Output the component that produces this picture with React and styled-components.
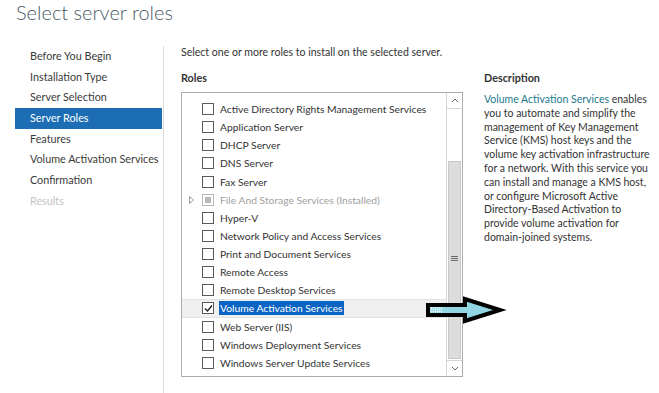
import React from "react";
import styled, { createGlobalStyle } from "styled-components";

const Global = createGlobalStyle`
  html, body { margin: 0; padding: 0; background: #fff; }
  body { font-family: "Lato", "Noto Sans", sans-serif; font-size: 10.8px; color: #333; }
  #root { position: relative; width: 659px; height: 393px; overflow: hidden; }
`;

const Page = styled.div`
  position: relative;
  width: 659px;
  height: 393px;
`;

const Title = styled.h1`
  margin: 0;
  padding: 0 0 0 16px;
  height: 46px;
  font-family: "Lato", "Open Sans", sans-serif;
  font-weight: 300;
  font-size: 20px;
  line-height: 24px;
  color: #4a5a66;
`;

const Body = styled.div`
  display: flex;
  height: 347px;
`;

const Nav = styled.nav`
  width: 147px;
  padding-left: 15px;
  border-right: 1px solid #dcdcdc;
  padding-right: 1px;
`;

const NavItem = styled.div`
  height: 20.7px;
  line-height: 20.7px;
  padding-left: 15px;
  white-space: nowrap;
  color: ${(p) => (p.$active ? "#fff" : p.$disabled ? "#c4c4c4" : "#3a3a3a")};
  background: ${(p) => (p.$active ? "#1c6db4" : "transparent")};
`;

const Content = styled.div`
  flex: 1;
  padding-left: 17px;
`;

const Intro = styled.div`
  height: 12px;
  line-height: 12px;
  font-size: 10.55px;
  color: #333;
`;

const Columns = styled.div`
  display: flex;
  gap: 21px;
  margin-top: 13px;
`;

const RolesCol = styled.div`
  width: 282px;
`;

const Heading = styled.div`
  font-weight: 700;
  color: #333;
  height: 14px;
  line-height: 14px;
`;

const ListBox = styled.div`
  margin-top: 7px;
  height: 283px;
  border: 1px solid #acacac;
  display: flex;
`;

const Rows = styled.div`
  flex: 1;
  padding-top: 7px;
`;

const Row = styled.div`
  display: flex;
  align-items: center;
  height: 18.14px;
  box-sizing: border-box;
  background: ${(p) => (p.$selected ? "#f0f0f0" : "transparent")};
  border-top: 1px solid ${(p) => (p.$selected ? "#e2e2e2" : "transparent")};
  border-bottom: 1px solid ${(p) => (p.$selected ? "#e2e2e2" : "transparent")};
`;

const Expander = styled.div`
  width: 20px;
  display: flex;
  justify-content: center;
  padding-right: 1px;
  box-sizing: border-box;
`;

const Box = styled.div`
  width: 10px;
  height: 10px;
  border: 1px solid ${(p) => (p.$disabled ? "#b5b5b5" : "#5a5a5a")};
  background: #fff;
  display: flex;
  align-items: center;
  justify-content: center;
  flex: none;
`;

const Fill = styled.div`
  width: 6px;
  height: 6px;
  background: #b8b8b8;
`;

const Label = styled.span`
  margin-left: 5px;
  padding: 0 1px;
  white-space: nowrap;
  font-size: 10.3px;
  line-height: 14px;
  color: ${(p) => (p.$disabled ? "#a0a0a0" : p.$selected ? "#fff" : "#333")};
  background: ${(p) => (p.$selected ? "#0a64c4" : "transparent")};
`;

const Scrollbar = styled.div`
  width: 15px;
  border-left: 1px solid #d6d6d6;
  display: flex;
  flex-direction: column;
  background: #fff;
`;

const ScrollBtn = styled.div`
  height: 15px;
  display: flex;
  align-items: center;
  justify-content: center;
  border-${(p) => (p.$down ? "top" : "bottom")}: 1px solid #d6d6d6;
`;

const Track = styled.div`
  flex: 1;
  padding-top: 52px;
  padding-bottom: 1px;
  display: flex;
  flex-direction: column;
`;

const Thumb = styled.div`
  flex: 1;
  margin: 0 1px;
  background: #dcdcdc;
  border: 1px solid #c8c8c8;
  display: flex;
  align-items: center;
  justify-content: center;
`;

const Grip = styled.div`
  width: 7px;
  height: 5px;
  background: repeating-linear-gradient(#6a6a6a 0 1px, transparent 1px 2px);
  margin-top: -4px;
`;

const Desc = styled.div`
  width: 172px;
`;

const DescText = styled.div`
  margin-top: 8px;
  line-height: 13.8px;
  font-size: 10.5px;
  color: #333;
`;

const Line = styled.div`
  white-space: nowrap;
`;

const Link = styled.span`
  color: #1b7a8e;
`;

const ArrowOverlay = styled.svg`
  position: absolute;
  left: 422px;
  top: 296px;
`;

const navItems = [
  "Before You Begin",
  "Installation Type",
  "Server Selection",
  "Server Roles",
  "Features",
  "Volume Activation Services",
  "Confirmation",
  "Results",
];

const roles = [
  { name: "Active Directory Rights Management Services" },
  { name: "Application Server" },
  { name: "DHCP Server" },
  { name: "DNS Server" },
  { name: "Fax Server" },
  { name: "File And Storage Services (Installed)", installed: true },
  { name: "Hyper-V" },
  { name: "Network Policy and Access Services" },
  { name: "Print and Document Services" },
  { name: "Remote Access" },
  { name: "Remote Desktop Services" },
  { name: "Volume Activation Services", checked: true },
  { name: "Web Server (IIS)" },
  { name: "Windows Deployment Services" },
  { name: "Windows Server Update Services" },
];

const descLines = [
  "you to automate and simplify the",
  "management of Key Management",
  "Service (KMS) host keys and the",
  "volume key activation infrastructure",
  "for a network. With this service you",
  "can install and manage a KMS host,",
  "or configure Microsoft Active",
  "Directory-Based Activation to",
  "provide volume activation for",
  "domain-joined systems.",
];

function Check() {
  return (
    <svg width="9" height="9" viewBox="0 0 9 9">
      <path d="M1 4.5 L3.5 7 L8 1.5" fill="none" stroke="#222" strokeWidth="1.4" />
    </svg>
  );
}

function Caret({ down }) {
  return (
    <svg width="8" height="5" viewBox="0 0 8 5">
      <path
        d={down ? "M1 1 L4 4 L7 1" : "M1 4 L4 1 L7 4"}
        fill="none"
        stroke="#606060"
        strokeWidth="1"
      />
    </svg>
  );
}

export default function App() {
  return (
    <Page>
      <Global />
      <Title>Select server roles</Title>
      <Body>
        <Nav>
          {navItems.map((n, i) => (
            <NavItem key={n} $active={i === 3} $disabled={i === 7}>
              {n}
            </NavItem>
          ))}
        </Nav>
        <Content>
          <Intro>Select one or more roles to install on the selected server.</Intro>
          <Columns>
            <RolesCol>
              <Heading>Roles</Heading>
              <ListBox>
                <Rows>
                  {roles.map((r) => (
                    <Row key={r.name} $selected={r.checked}>
                      <Expander>
                        {r.installed && (
                          <svg width="5" height="8" viewBox="0 0 5 8">
                            <path d="M0.5 0.5 L4.5 4 L0.5 7.5 Z" fill="none" stroke="#9a9a9a" />
                          </svg>
                        )}
                      </Expander>
                      <Box $disabled={r.installed}>
                        {r.installed && <Fill />}
                        {r.checked && <Check />}
                      </Box>
                      <Label $disabled={r.installed} $selected={r.checked}>
                        {r.name}
                      </Label>
                    </Row>
                  ))}
                </Rows>
                <Scrollbar>
                  <ScrollBtn>
                    <Caret />
                  </ScrollBtn>
                  <Track>
                    <Thumb>
                      <Grip />
                    </Thumb>
                  </Track>
                  <ScrollBtn $down>
                    <Caret down />
                  </ScrollBtn>
                </Scrollbar>
              </ListBox>
            </RolesCol>
            <Desc>
              <Heading>Description</Heading>
              <DescText>
                <Line>
                  <Link>Volume Activation Services</Link> enables
                </Line>
                {descLines.map((l) => (
                  <Line key={l}>{l}</Line>
                ))}
              </DescText>
            </Desc>
          </Columns>
        </Content>
      </Body>
      <ArrowOverlay width="92" height="30" viewBox="0 0 92 30">
        <defs>
          <pattern id="dots" width="2" height="2" patternUnits="userSpaceOnUse">
            <rect width="2" height="2" fill="#c8ecf2" />
            <rect width="1" height="1" fill="#7fcfe0" />
          </pattern>
        </defs>
        <path
          d="M6 9 L43 9 L43 3 L78 14 L43 25 L43 19 L6 19 Z"
          fill="#92d6e4"
          stroke="#000"
          strokeWidth="4"
          strokeLinejoin="miter"
        />
        <rect x="8" y="11" width="12" height="6" fill="url(#dots)" />
      </ArrowOverlay>
    </Page>
  );
}
